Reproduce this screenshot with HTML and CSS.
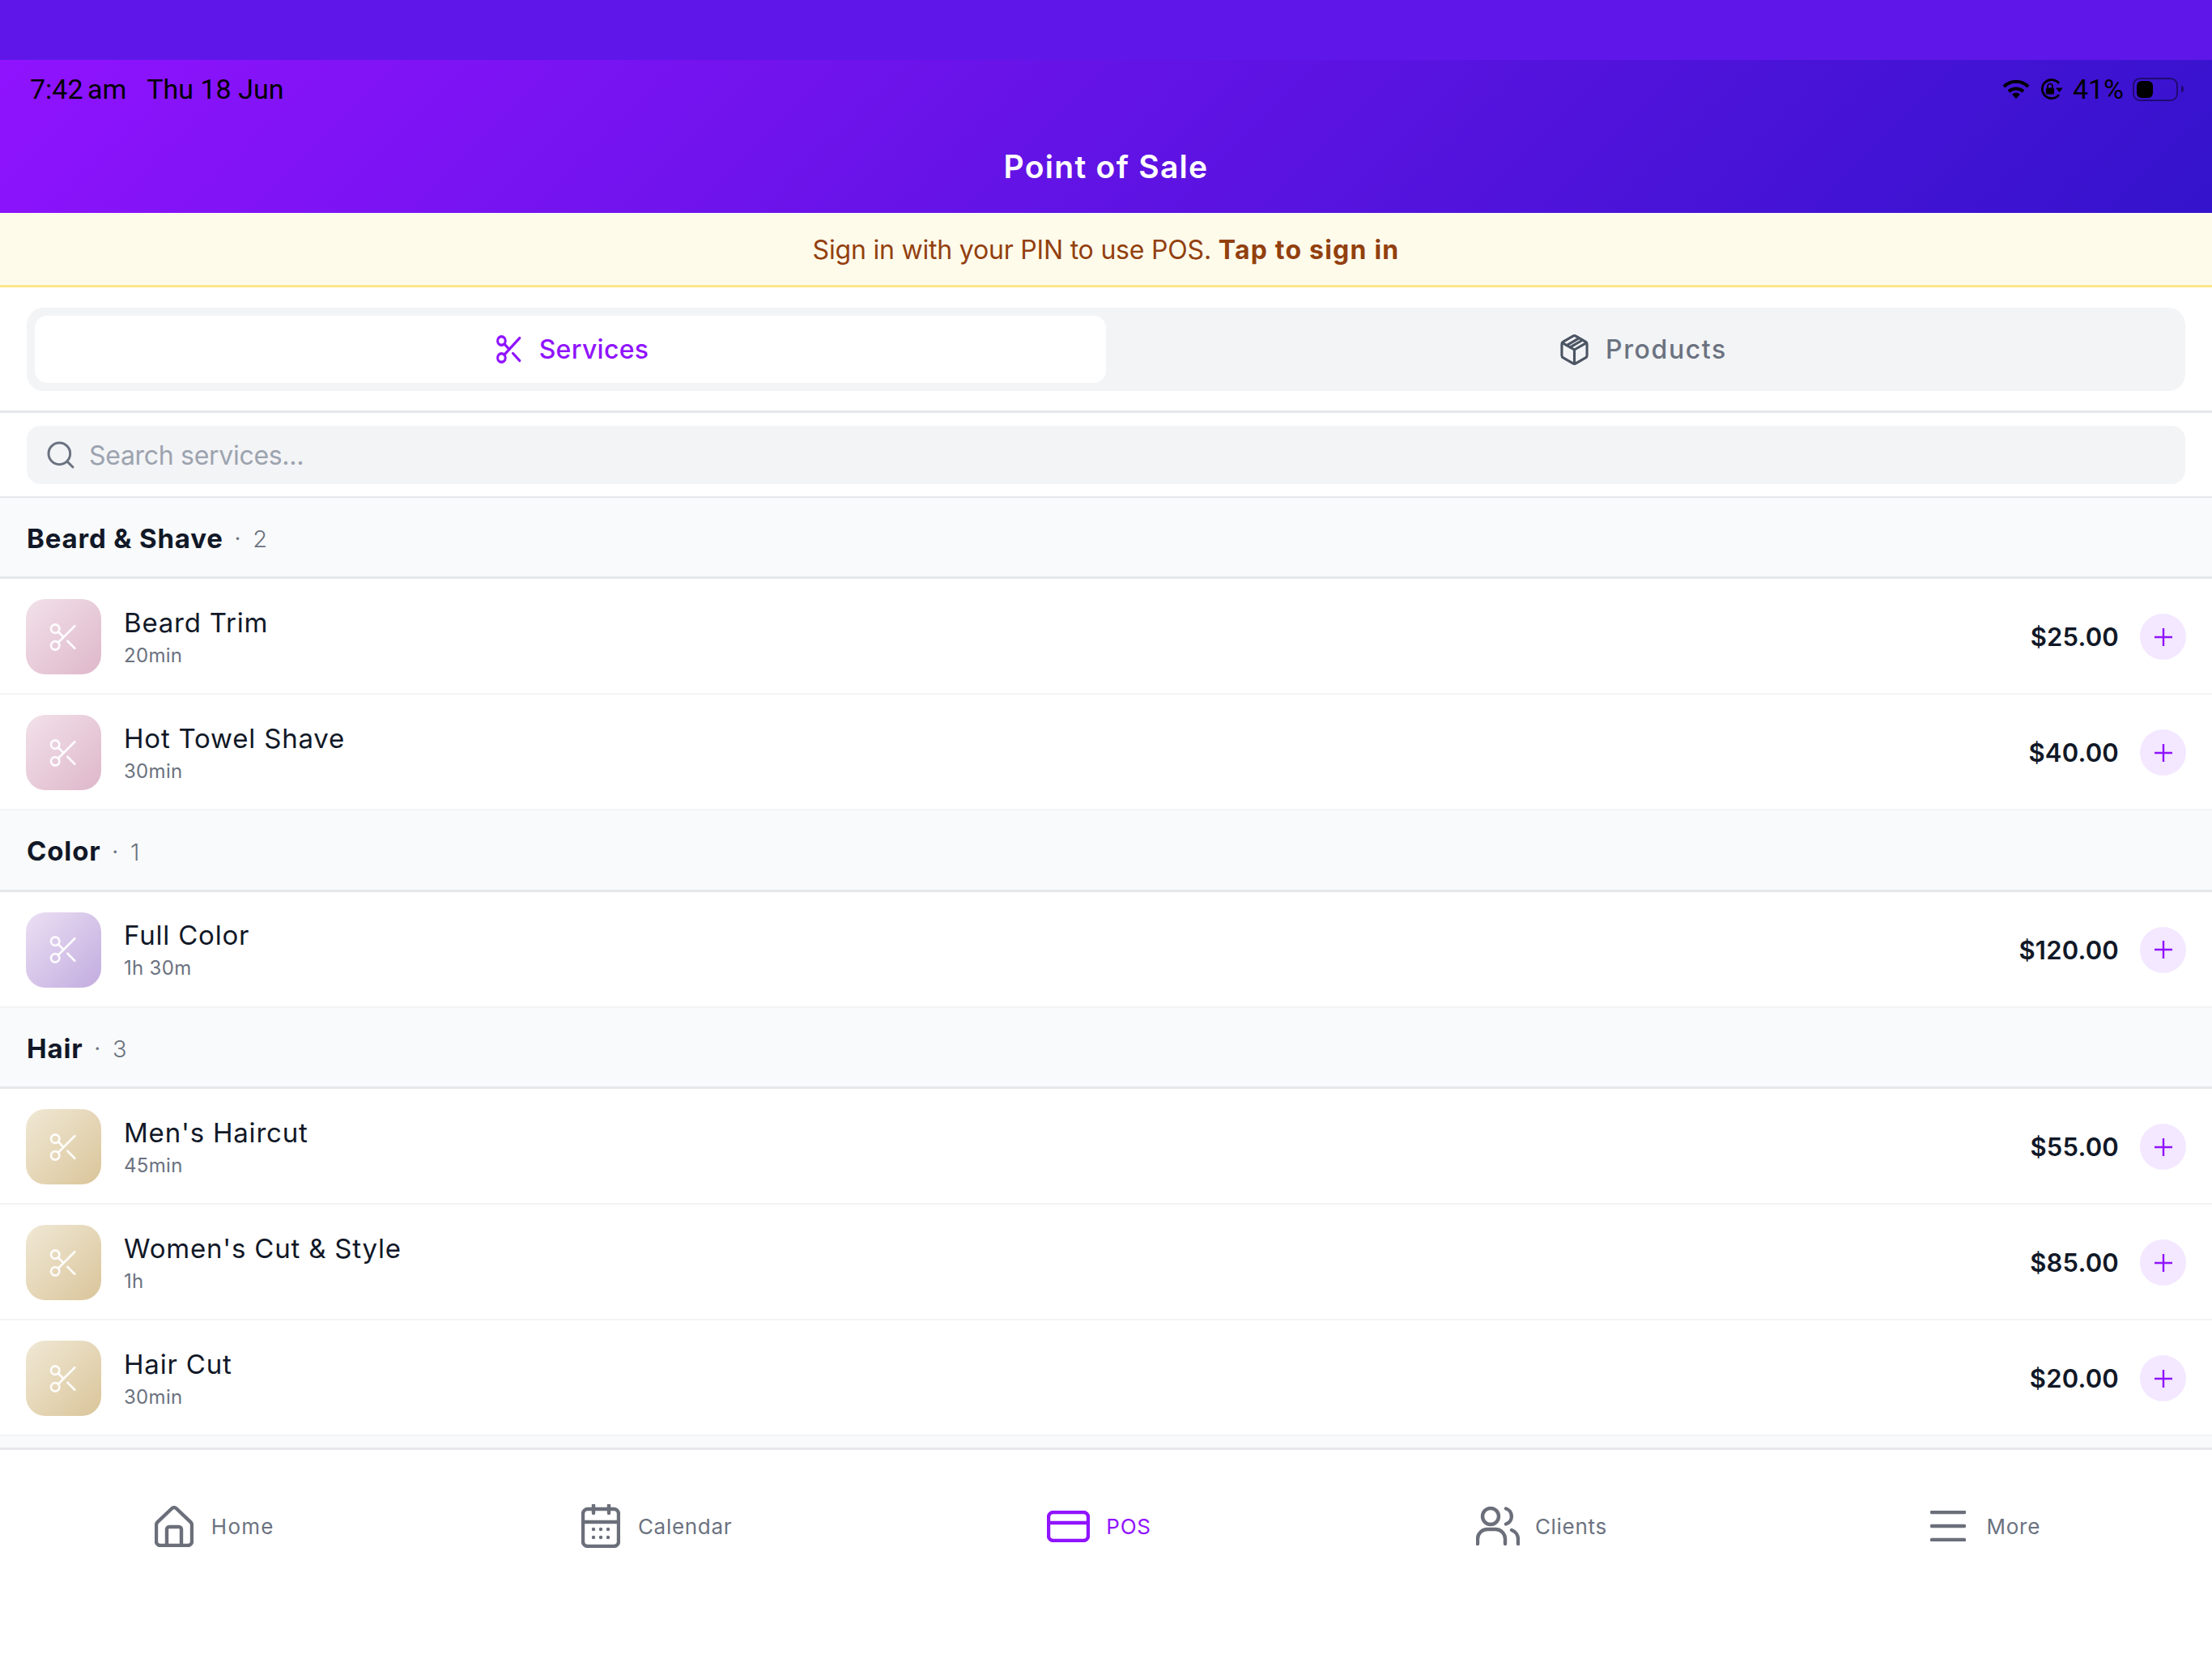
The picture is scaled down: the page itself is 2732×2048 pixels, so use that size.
FILE: index.html
```html
<!DOCTYPE html>
<html lang="en">
<head>
<meta charset="utf-8">
<title>Point of Sale</title>
<link rel="stylesheet" href="styles.css">
</head>
<body>
<div class="page">
  <div class="band"></div>
  <header class="header">
    <div class="status">
      <div class="status-left"><span class="time">7:42 am</span><span>Thu 18 Jun</span></div>
      <div class="status-right">
        <svg class="st-wifi" viewBox="0 0 34 24"><path d="M2 9A21 21 0 0 1 32 9" fill="none" stroke="#000" stroke-width="4"/><path d="M8 15A13 13 0 0 1 26 15" fill="none" stroke="#000" stroke-width="4"/><path d="M12 18.500A8 8 0 0 1 22 18.500L17 24Z"/></svg>
        <svg class="st-lock" viewBox="0 0 29 26"><path d="M24 20A11.500 11.500 0 1 1 24 6" fill="none" stroke="#000" stroke-width="2.800"/><path d="M20 11.500h8.800L24.400 17Z"/><rect x="8" y="11.500" width="10" height="8" rx="1.500"/><path d="M10 12V9.500a3 3 0 0 1 6 0V12" fill="none" stroke="#000" stroke-width="1.700"/></svg>
        <span>41%</span>
        <div class="battery"><div class="battery-fill"></div></div>
        <div class="battery-nib"></div>
      </div>
    </div>
    <h1 class="title">Point of Sale</h1>
  </header>
  <div class="banner"><span class="banner-text">Sign in with your PIN to use POS. </span><strong class="banner-link">Tap to sign in</strong></div>
  <div class="tabs-wrap">
    <div class="tabs">
      <div class="tab tab-active">
        <svg class="tab-icon" viewBox="2 2 20 20" preserveAspectRatio="none"><use href="#scissors"/></svg>
        <span>Services</span>
      </div>
      <div class="tab">
        <svg class="tab-icon tab-box" viewBox="2 1 20 22"><path d="M21 8a2 2 0 0 0-1-1.730l-7-4a2 2 0 0 0-2 0l-7 4A2 2 0 0 0 3 8v8a2 2 0 0 0 1 1.730l7 4a2 2 0 0 0 2 0l7-4A2 2 0 0 0 21 16Z"/><path d="m3.300 7 8.700 5 8.700-5"/><path d="M12 22V12"/><path d="m6.500 8.850 8.700-5"/><path d="m9 10.200 8.700-5"/></svg>
        <span>Products</span>
      </div>
    </div>
  </div>
  <div class="search-wrap">
    <div class="search">
      <svg class="search-icon" viewBox="0 0 24 24"><circle cx="11" cy="11" r="8"/><path d="m21 21-4.300-4.300"/></svg>
      <span>Search services...</span>
    </div>
  </div>

  <main class="list">
    <div class="section"><span class="section-name">Beard &amp; Shave</span><span class="section-dot">·</span><span class="section-count">2</span></div>
    <div class="row"><div class="thumb thumb-pink"><svg class="thumb-icon" viewBox="3 3 18 18"><use href="#scissors"/></svg></div><div class="info"><div class="name">Beard Trim</div><div class="meta">20min</div></div><div class="price">$25.00</div><div class="add"><svg viewBox="0 0 24 24"><path d="M12 1v22M1 12h22"/></svg></div></div>
    <div class="row"><div class="thumb thumb-pink"><svg class="thumb-icon" viewBox="3 3 18 18"><use href="#scissors"/></svg></div><div class="info"><div class="name">Hot Towel Shave</div><div class="meta">30min</div></div><div class="price">$40.00</div><div class="add"><svg viewBox="0 0 24 24"><path d="M12 1v22M1 12h22"/></svg></div></div>
    <div class="section"><span class="section-name">Color</span><span class="section-dot">·</span><span class="section-count">1</span></div>
    <div class="row"><div class="thumb thumb-purple"><svg class="thumb-icon" viewBox="3 3 18 18"><use href="#scissors"/></svg></div><div class="info"><div class="name">Full Color</div><div class="meta">1h 30m</div></div><div class="price">$120.00</div><div class="add"><svg viewBox="0 0 24 24"><path d="M12 1v22M1 12h22"/></svg></div></div>
    <div class="section"><span class="section-name">Hair</span><span class="section-dot">·</span><span class="section-count">3</span></div>
    <div class="row"><div class="thumb thumb-gold"><svg class="thumb-icon" viewBox="3 3 18 18"><use href="#scissors"/></svg></div><div class="info"><div class="name">Men's Haircut</div><div class="meta">45min</div></div><div class="price">$55.00</div><div class="add"><svg viewBox="0 0 24 24"><path d="M12 1v22M1 12h22"/></svg></div></div>
    <div class="row"><div class="thumb thumb-gold"><svg class="thumb-icon" viewBox="3 3 18 18"><use href="#scissors"/></svg></div><div class="info"><div class="name">Women's Cut &amp; Style</div><div class="meta">1h</div></div><div class="price">$85.00</div><div class="add"><svg viewBox="0 0 24 24"><path d="M12 1v22M1 12h22"/></svg></div></div>
    <div class="row"><div class="thumb thumb-gold"><svg class="thumb-icon" viewBox="3 3 18 18"><use href="#scissors"/></svg></div><div class="info"><div class="name">Hair Cut</div><div class="meta">30min</div></div><div class="price">$20.00</div><div class="add"><svg viewBox="0 0 24 24"><path d="M12 1v22M1 12h22"/></svg></div></div>
  </main>

  <nav class="nav">
    <div class="nav-item">
      <svg class="nav-icon ni-home" viewBox="0 0 48 51"><path d="M2 44V24a6 6 0 0 1 1.300-3.700L21 3.500a4 4 0 0 1 6 0l17.700 16.800A6 6 0 0 1 46 24v20a5 5 0 0 1-5 5H7a5 5 0 0 1-5-5Z"/><path d="M15 49V29a3 3 0 0 1 3-3h12a3 3 0 0 1 3 3v20"/></svg>
      <span class="nl-home">Home</span>
    </div>
    <div class="nav-item">
      <svg class="nav-icon ni-cal" viewBox="0 0 48 54"><rect x="2" y="6" width="44" height="46" rx="6"/><path d="M2 22h44M15 1v10M34 1v10"/><path class="dots" d="M15 31h.01M24 31h.01M33 31h.01M15 41h.01M24 41h.01M33 41h.01"/></svg>
      <span>Calendar</span>
    </div>
    <div class="nav-item nav-active">
      <svg class="nav-icon ni-card" viewBox="0 0 53 39"><rect x="2" y="2" width="49" height="35" rx="6"/><path d="M2 15h49"/></svg>
      <span>POS</span>
    </div>
    <div class="nav-item">
      <svg class="nav-icon ni-users" viewBox="0 0 54 48"><circle cx="18" cy="12" r="10"/><path d="M37 2.500a10 10 0 0 1 0 19"/><path d="M2 46v-6a12 12 0 0 1 12-12h10a12 12 0 0 1 12 12v6"/><path d="M44 29a12 12 0 0 1 8 11v6"/></svg>
      <span>Clients</span>
    </div>
    <div class="nav-item">
      <svg class="nav-icon ni-menu" viewBox="0 0 44 38"><path d="M2 2h40M2 19h40M2 36h40"/></svg>
      <span>More</span>
    </div>
  </nav>
</div>
<svg class="defs" aria-hidden="true"><defs><g id="scissors"><circle cx="6" cy="6" r="3"/><circle cx="6" cy="18" r="3"/><path d="M8.120 8.120 12 12"/><path d="M20 4 8.120 15.880"/><path d="M14.800 14.800 20 20"/></g></defs></svg>
</body>
</html>
```

FILE: styles.css
```css
* { box-sizing: border-box; }
html, body { margin: 0; padding: 0; }
body { width: 2732px; height: 2048px; overflow: hidden; background: #fff; font-family: "Inter", "Noto Sans", sans-serif; color: #111827; }
.defs { width: 0; height: 0; display: block; }
.page { display: flex; flex-direction: column; height: 2048px; }

.band { height: 74px; background: #5f17e9; flex: none; }
.header { height: 189px; flex: none; background: linear-gradient(135deg, #9013fe 0%, #3413cc 100%); display: flex; flex-direction: column; }
.status { height: 72px; padding: 0 35px 0 37px; display: flex; justify-content: space-between; align-items: center; font-family: "Roboto", sans-serif; font-size: 34px; color: #000; flex: none; }
.status-left { display: flex; gap: 25px; }
.time { word-spacing: -3px; }
.status-right { display: flex; align-items: center; }
.st-wifi { width: 34px; height: 24px; margin-right: 12px; }
.st-lock { width: 29px; height: 26px; margin-right: 12px; }
.battery { width: 56px; height: 29px; margin-left: 11px; border: 2px solid rgba(0,0,0,.45); border-radius: 9px; padding: 2px 3px; }
.battery-fill { width: 20px; height: 21px; background: #000; border-radius: 6px; }
.battery-nib { width: 3px; height: 8px; margin-left: 4px; background: rgba(0,0,0,.45); border-radius: 0 3px 3px 0; }
.title { margin: 0; padding-top: 37px; text-align: center; color: #fff; font-size: 39px; font-weight: 600; line-height: 46px; letter-spacing: 1.300px; }

.banner { height: 92px; flex: none; padding-top: 2px; background: #fffbeb; border-bottom: 3px solid #fde68a; display: flex; align-items: center; justify-content: center; color: #92400e; font-size: 32px; white-space: pre; }
.banner-text { letter-spacing: -0.2px; }
.banner-link { font-weight: 700; letter-spacing: 1.2px; }

.tabs-wrap { height: 155px; flex: none; padding: 25px 33px 0 33px; border-bottom: 3px solid #e5e7eb; }
.tabs { height: 103px; background: #f3f4f6; border-radius: 21px; padding: 10px; display: flex; }
.tab { flex: 1; display: flex; align-items: center; justify-content: center; gap: 21px; padding-left: 5px; border-radius: 15px; color: #6b7280; font-size: 32px; font-weight: 500; letter-spacing: 1.600px; }
.tab-active { background: #fff; color: #9013fe; letter-spacing: 0.3px; }
.tab-icon { width: 32px; height: 35px; flex: none; fill: none; stroke: #9013fe; stroke-width: 1.900; stroke-linecap: round; stroke-linejoin: round; }
.tab-box { width: 35px; height: 38px; stroke: #4b5563; stroke-width: 1.800; }

.search-wrap { height: 104.500px; flex: none; padding: 16px 33px 0; border-bottom: 2px solid #e5e7eb; }
.search { height: 72px; background: #f3f4f6; border-radius: 17px; display: flex; align-items: center; padding-left: 22px; gap: 15px; color: #9ca3af; font-size: 32px; letter-spacing: -0.3px; }
.search-icon { width: 40px; height: 40px; fill: none; stroke: #6b7280; stroke-width: 1.800; stroke-linecap: round; stroke-linejoin: round; }

.list { flex: 1; min-height: 0; background: #f9fafb; }
.section { height: 100.500px; background: #f9fafb; border-bottom: 3px solid #e5e7eb; padding: 3px 33px 0; display: flex; align-items: center; }
.section-name { font-size: 33px; font-weight: 700; letter-spacing: 0.85px; color: #111827; }
.section-dot { margin-left: 14px; font-size: 26px; color: #6b7280; }
.section-count { margin-left: 15px; padding-top: 2px; font-size: 29px; font-weight: 300; color: #6b7280; }
.row { height: 143px; background: #fff; border-bottom: 2px solid #f3f4f6; padding: 2px 32px 0; display: flex; align-items: center; }
.thumb { width: 93px; height: 93px; border-radius: 24px; display: flex; align-items: center; justify-content: center; flex: none; }
.thumb-pink { background: linear-gradient(135deg, #f2e1e9, #deb7ca); }
.thumb-purple { background: linear-gradient(135deg, #ebdff3, #c2acdf); }
.thumb-gold { background: linear-gradient(135deg, #f0e8d5, #dac59a); }
.thumb-icon { width: 31px; height: 32px; overflow: visible; fill: none; stroke: #fff; stroke-opacity: .9; stroke-width: 1.600; stroke-linecap: round; stroke-linejoin: round; }
.info { margin-left: 28px; flex: 1; display: flex; flex-direction: column; gap: 6px; }
.name { font-size: 33px; line-height: 40px; font-weight: 400; letter-spacing: 0.8px; color: #111827; }
.meta { font-size: 24px; line-height: 30px; color: #6b7280; letter-spacing: 0.3px; }
.price { font-size: 31px; font-weight: 600; letter-spacing: 0.2px; color: #111827; }
.add { width: 57px; height: 57px; margin-left: 26px; border-radius: 50%; background: #f3e8ff; display: flex; align-items: center; justify-content: center; flex: none; }
.add svg { width: 24px; height: 24px; fill: none; stroke: #9013fe; stroke-width: 2.400; }

.nav { height: 260px; flex: none; background: #fff; border-top: 3px solid #e5e7eb; padding-bottom: 69px; display: grid; grid-template-columns: repeat(5, 1fr); }
.nav-item { display: flex; align-items: center; justify-content: center; gap: 22px; padding-right: 17px; color: #6b7280; font-size: 26px; letter-spacing: 0.7px; }
.nav-active { color: #9013fe; }
.nav-icon { flex: none; fill: none; stroke: #6b6f7a; stroke-width: 4.400; stroke-linecap: round; stroke-linejoin: round; }
.nav-active .nav-icon { stroke: #9013fe; }
.nl-home { letter-spacing: 1.200px; }
.ni-home { width: 48px; height: 51px; }
.ni-cal { width: 48px; height: 54px; }
.ni-card { width: 53px; height: 39px; margin-right: -2px; }
.ni-users { width: 54px; height: 48px; margin-right: -3px; }
.ni-menu { width: 44px; height: 38px; margin-left: 3px; margin-right: 4px; }
```
